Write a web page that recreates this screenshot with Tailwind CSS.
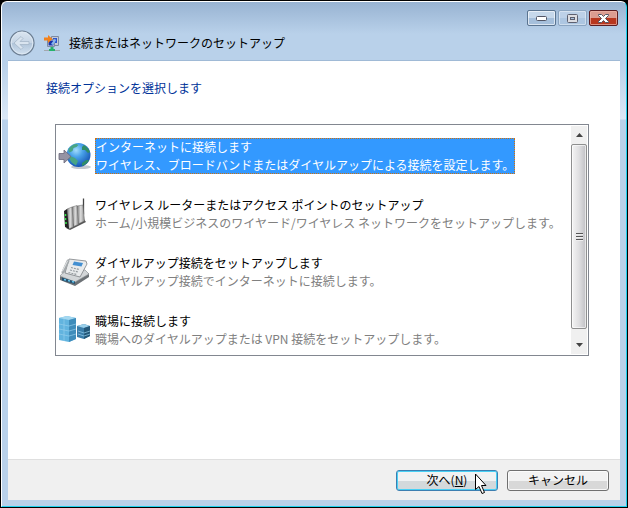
<!DOCTYPE html>
<html lang="ja">
  <head>
    <meta charset="UTF-8" />
    <meta name="viewport" content="width=device-width, initial-scale=1.0" />
    <script src="https://cdn.jsdelivr.net/npm/@tailwindcss/browser@4"></script>
    <title>接続またはネットワークのセットアップ</title>
  </head>
  <body
    class="h-screen bg-black p-px font-['Noto_Sans_CJK_JP',sans-serif] text-xs text-black"
  >
    <div
      class="flex h-full flex-col rounded-t-md border border-t-white border-r-[#1fd1ee] border-b-[#1fd1ee] border-l-white bg-[linear-gradient(#98b3d2,#b9d1ea_32px,#b9d1ea_62px,#dbe8f6_117px,#b9d1ea_118px)] px-1.5 pb-1.5"
    >
      <!-- window buttons -->
      <div class="flex h-6 shrink-0 items-end justify-end gap-0.5 pr-0.5">
        <button
          aria-label="最小化"
          class="flex h-4 w-[29px] items-center justify-center rounded-xs border border-[#5a7490] bg-linear-to-b from-[#c6d8eb] from-50% to-[#a5bfdb] to-50% inset-ring inset-ring-white/60"
        >
          <svg width="11" height="5" viewBox="0 0 11 5">
            <rect x=".5" y=".5" width="10" height="4" rx="1" fill="#fff" stroke="#535666" />
          </svg>
        </button>
        <button
          aria-label="最大化"
          disabled
          class="flex h-4 w-[29px] items-center justify-center rounded-xs border border-[#8ba5c1] bg-linear-to-b from-[#bdd1e8] from-50% to-[#adc6e1] to-50% inset-ring inset-ring-white/40"
        >
          <svg width="11" height="9" viewBox="0 0 11 9">
            <rect x=".5" y=".5" width="10" height="8" rx="1" fill="#dcdde2" stroke="#5d6070" />
            <rect x="3.5" y="3.5" width="4" height="2" fill="#a9c2df" stroke="#5d6070" />
          </svg>
        </button>
        <button
          aria-label="閉じる"
          class="flex h-4 w-[29px] items-center justify-center rounded-xs border border-[#5b1d22] bg-linear-to-b from-[#dc9c91] from-50% to-[#b8371f] to-50% inset-ring inset-ring-[#eeb5a8]/70"
        >
          <svg width="11" height="9" viewBox="0 0 11 9">
            <path d="M.5.5h3l2 2 2-2h3v1l-3 3 3 3v1h-3l-2-2-2 2h-3v-1l3-3-3-3z" fill="#fff" stroke="#535666" />
          </svg>
        </button>
      </div>

      <!-- title -->
      <header class="flex h-[34px] shrink-0 items-center gap-[9px] pl-px">
        <button aria-label="戻る" disabled>
          <svg width="26" height="26" viewBox="0 0 26 26">
            <defs>
              <linearGradient id="back" x1="0" y1="0" x2="0" y2="1">
                <stop offset="0" stop-color="#dbe6f1" />
                <stop offset=".48" stop-color="#c6d5e5" />
                <stop offset=".52" stop-color="#b1c5da" />
                <stop offset="1" stop-color="#d2e1f0" />
              </linearGradient>
            </defs>
            <circle cx="13" cy="13" r="12" fill="url(#back)" stroke="#6c7e92" stroke-width="1.2" />
            <circle cx="13" cy="13" r="10.8" fill="none" stroke="#dde8f3" />
            <path d="M5 13l7-6.500 2 2-3 3h9v3h-9l3 3-2 2z" fill="#d9e4ef" stroke="#a5b6c8" stroke-width=".8" />
          </svg>
        </button>
        <svg width="16" height="17" viewBox="0 0 16 17" class="shrink-0">
          <path d="M7.500 1.500h7v9h-7z" fill="#c3cad8" stroke="#7e8ba3" />
          <path d="M9 3h4v5H9z" fill="#2a50cc" />
          <path d="M3.500 4.500h7v7h-7z" fill="#d3dae6" stroke="#7e8ba3" />
          <path d="M4.500 5.500h5v5h-5z" fill="#1531a8" />
          <path d="M7 9l4-5.500 1 2-3 4.500z" fill="#86b4f0" />
          <path d="M0 2.500h4V0l4.500 4L4 8V5.500H0z" fill="#f2821d" />
          <path d="M6.500 12h3v2H11v2H5v-2h1.500z" fill="#27b26b" />
          <path d="M0 15h5v1H0zM11 15h5v1h-5z" fill="#a2a8ae" />
        </svg>
        <h1>接続またはネットワークのセットアップ</h1>
      </header>

      <main class="flex flex-1 flex-col border-t border-[#a0bad6] bg-white">
        <div class="flex-1 pt-[18px] pr-[31px] pl-[38px]">
          <h2 class="leading-[18px] text-[#003399]">
            接続オプションを選択します
          </h2>
          <div class="mt-[27px] ml-[9px] flex h-[232px] border border-[#828790] p-px">
            <ul class="flex flex-1 flex-col gap-[22px] pt-3 pl-px leading-4 whitespace-nowrap">
              <li class="flex items-center gap-[3px]">
                <svg width="34" height="34" viewBox="0 0 34 34" class="shrink-0">
                  <defs>
                    <radialGradient id="sea" cx=".4" cy=".3" r=".7">
                      <stop offset="0" stop-color="#a4ddfb" />
                      <stop offset=".4" stop-color="#4aa3ea" />
                      <stop offset="1" stop-color="#1555b4" />
                    </radialGradient>
                  </defs>
                  <ellipse cx="23" cy="28" rx="10" ry="2" fill="#c3c8cf" />
                  <circle cx="20.5" cy="16" r="12" fill="url(#sea)" />
                  <path d="M10.500 10c2-3 5-5 8-5l2 1-2 2-3 1-1 3-3 1.500-1-1z" fill="#48a584" />
                  <path d="M12 17l5 2 3 3-2 4.500c-4-2-6-5-7-8z" fill="#48a584" />
                  <path d="M26 6c3 2 5 4 6 7l-2 1-3-3-3 0 0-3zM24 24l4-3 3 0c-1 3-4 5-7 6z" fill="#2f8d68" />
                  <path d="M1 14.500h5V11l7 6.500L6 24v-3.500H1z" fill="#9593a3" stroke="#696779" stroke-width=".8" />
                </svg>
                <a href="#internet" class="flex flex-col gap-0.5 border border-dotted border-[#d0700c] bg-[#3399ff] text-white">
                  <span>インターネットに接続します</span>
                  <span>ワイヤレス、ブロードバンドまたはダイヤルアップによる接続を設定します。</span>
                </a>
              </li>
              <li class="flex items-center gap-[3px]">
                <svg width="34" height="34" viewBox="0 0 34 34" class="shrink-0">
                  <defs>
                    <linearGradient id="metal" x1="0" x2="1">
                      <stop offset="0" stop-color="#777" />
                      <stop offset=".5" stop-color="#ddd" />
                      <stop offset="1" stop-color="#858585" />
                    </linearGradient>
                  </defs>
                  <path d="M25.500 1.500v16" stroke="#444" stroke-width="1.300" />
                  <path d="M8 31l4 2 16-8-3-4z" fill="#555" />
                  <path d="M19 9l6-1 1.500 16L20 27z" fill="url(#metal)" stroke="#666" stroke-width=".5" />
                  <path d="M14 10l5-1.500 1.500 19-5 2z" fill="url(#metal)" stroke="#666" stroke-width=".5" />
                  <path d="M9 12l5-2 1.500 20-5 2z" fill="url(#metal)" stroke="#666" stroke-width=".5" />
                  <path d="M6 14l3-2 2 20-4-2z" fill="#222" />
                  <path d="M7.500 17v2M7.500 21v2M8 25v2" stroke="#35e04a" stroke-width="1.500" />
                </svg>
                <a href="#router" class="flex flex-col gap-0.5 py-px">
                  <span>ワイヤレス ルーターまたはアクセス ポイントのセットアップ</span>
                  <span class="text-[#808080]">ホーム/小規模ビジネスのワイヤード/ワイヤレス ネットワークをセットアップします。</span>
                </a>
              </li>
              <li class="flex items-center gap-[3px]">
                <svg width="34" height="34" viewBox="0 0 34 34" class="shrink-0">
                  <path d="M2 21l15 6 14-9v4l-14 9L2 25z" fill="#6d7276" />
                  <path d="M2 21l9-10 16 4 4 4-14 8z" fill="#d3d6d8" stroke="#8b9094" stroke-width=".7" />
                  <path d="M4 22.500l13 4V29L4 25.500z" fill="#28526f" />
                  <path d="M6 24.500l2 .5M10 25.500l2 .5M14 26.500l2 .5" stroke="#65c6ee" stroke-width="1.500" />
                  <path d="M11 4l17 2 1 3-7 13-15-4z" fill="#e9ebec" stroke="#7d8285" stroke-width=".8" />
                  <path d="M16 6.500l9 1.500-1.500 3.500-9-1.500z" fill="#438fd1" />
                  <path d="M13 12.500l8 2M12 15l8 2M10.500 17.500l8 2" stroke="#959b9f" stroke-width="1.200" stroke-dasharray="2 1" />
                  <path d="M10 6L5 17" stroke="#a4a9ac" stroke-width="3" stroke-linecap="round" />
                  <path d="M9.500 6L4.500 16" stroke="#e6e8e9" stroke-linecap="round" />
                </svg>
                <a href="#dialup" class="flex flex-col gap-0.5 py-px">
                  <span>ダイヤルアップ接続をセットアップします</span>
                  <span class="text-[#808080]">ダイヤルアップ接続でインターネットに接続します。</span>
                </a>
              </li>
              <li class="flex items-center gap-[3px]">
                <svg width="34" height="34" viewBox="0 0 34 34" class="shrink-0">
                  <path d="M19 13l7-2 6 2v10l-6 3-7-2z" fill="#3b7eaa" />
                  <path d="M19 13l7-2 6 2-6 2z" fill="#9bd0ea" />
                  <path d="M26 15l6-2v10l-6 3z" fill="#245879" />
                  <path d="M1 5l8-2 9 2v21l-7 3-10-2z" fill="#62b4df" />
                  <path d="M1 5l8-2 9 2-7 2z" fill="#a5d8f0" />
                  <path d="M11 7l7-2v21l-7 3z" fill="#3f8dbb" />
                  <path d="M1 11l10 2 7-2M1 16l10 2 7-2M1 21l10 2 7-2M6 6v22M20 18l6 2 6-2M20 21l6 2 6-2" fill="none" stroke="#94cfec" stroke-width=".7" />
                </svg>
                <a href="#workplace" class="flex flex-col gap-0.5 py-px">
                  <span>職場に接続します</span>
                  <span class="text-[#808080]">職場へのダイヤルアップまたは VPN 接続をセットアップします。</span>
                </a>
              </li>
            </ul>
            <!-- scroll bar -->
            <div class="flex w-4 flex-col bg-[#f0f0f0]">
              <button aria-label="上へ" class="flex h-[18px] items-center justify-center">
                <svg width="7" height="4" viewBox="0 0 7 4"><path d="M3.500 0L7 4H0z" fill="#444" /></svg>
              </button>
              <div class="flex h-[185px] flex-col items-center justify-center gap-px rounded-xs border border-[#8e8f8f] bg-linear-to-r from-[#f4f4f4] via-[#dfdfe1] to-[#c0c0c4] inset-ring inset-ring-white/60">
                <span class="h-0.5 w-[7px] border-t border-[#555] bg-[#eee]"></span>
                <span class="h-0.5 w-[7px] border-t border-[#555] bg-[#eee]"></span>
                <span class="h-0.5 w-[7px] border-t border-[#555] bg-[#eee]"></span>
              </div>
              <button aria-label="下へ" class="flex flex-1 items-center justify-center pt-1.5">
                <svg width="7" height="4" viewBox="0 0 7 4"><path d="M0 0h7L3.500 4z" fill="#444" /></svg>
              </button>
            </div>
          </div>
        </div>

        <footer class="flex h-[41px] items-center justify-end gap-[9px] border-t border-[#dfdfdf] bg-[#f0f0f0] pr-[11px]">
          <button class="relative h-[21px] w-[102px] rounded-[3px] border border-[#3c7fb1] bg-linear-to-b from-[#f0f2f3] from-50% to-[#d3d9dc] to-50% inset-ring inset-ring-[#48d0f5]">
            次へ(<u>N</u>)
            <svg width="13" height="22" viewBox="0 0 13 22" class="absolute top-0.5 left-[78px]">
              <path d="M.5 1v15.500L4 13.500l3 7 2.500-1-3-7H11z" fill="#fff" stroke="#000" />
            </svg>
          </button>
          <button class="h-[21px] w-[102px] rounded-[3px] border border-[#707070] bg-linear-to-b from-[#f2f2f2] from-50% to-[#d8d8d8] to-50% inset-ring inset-ring-white/80">
            キャンセル
          </button>
        </footer>
      </main>
    </div>
  </body>
</html>
